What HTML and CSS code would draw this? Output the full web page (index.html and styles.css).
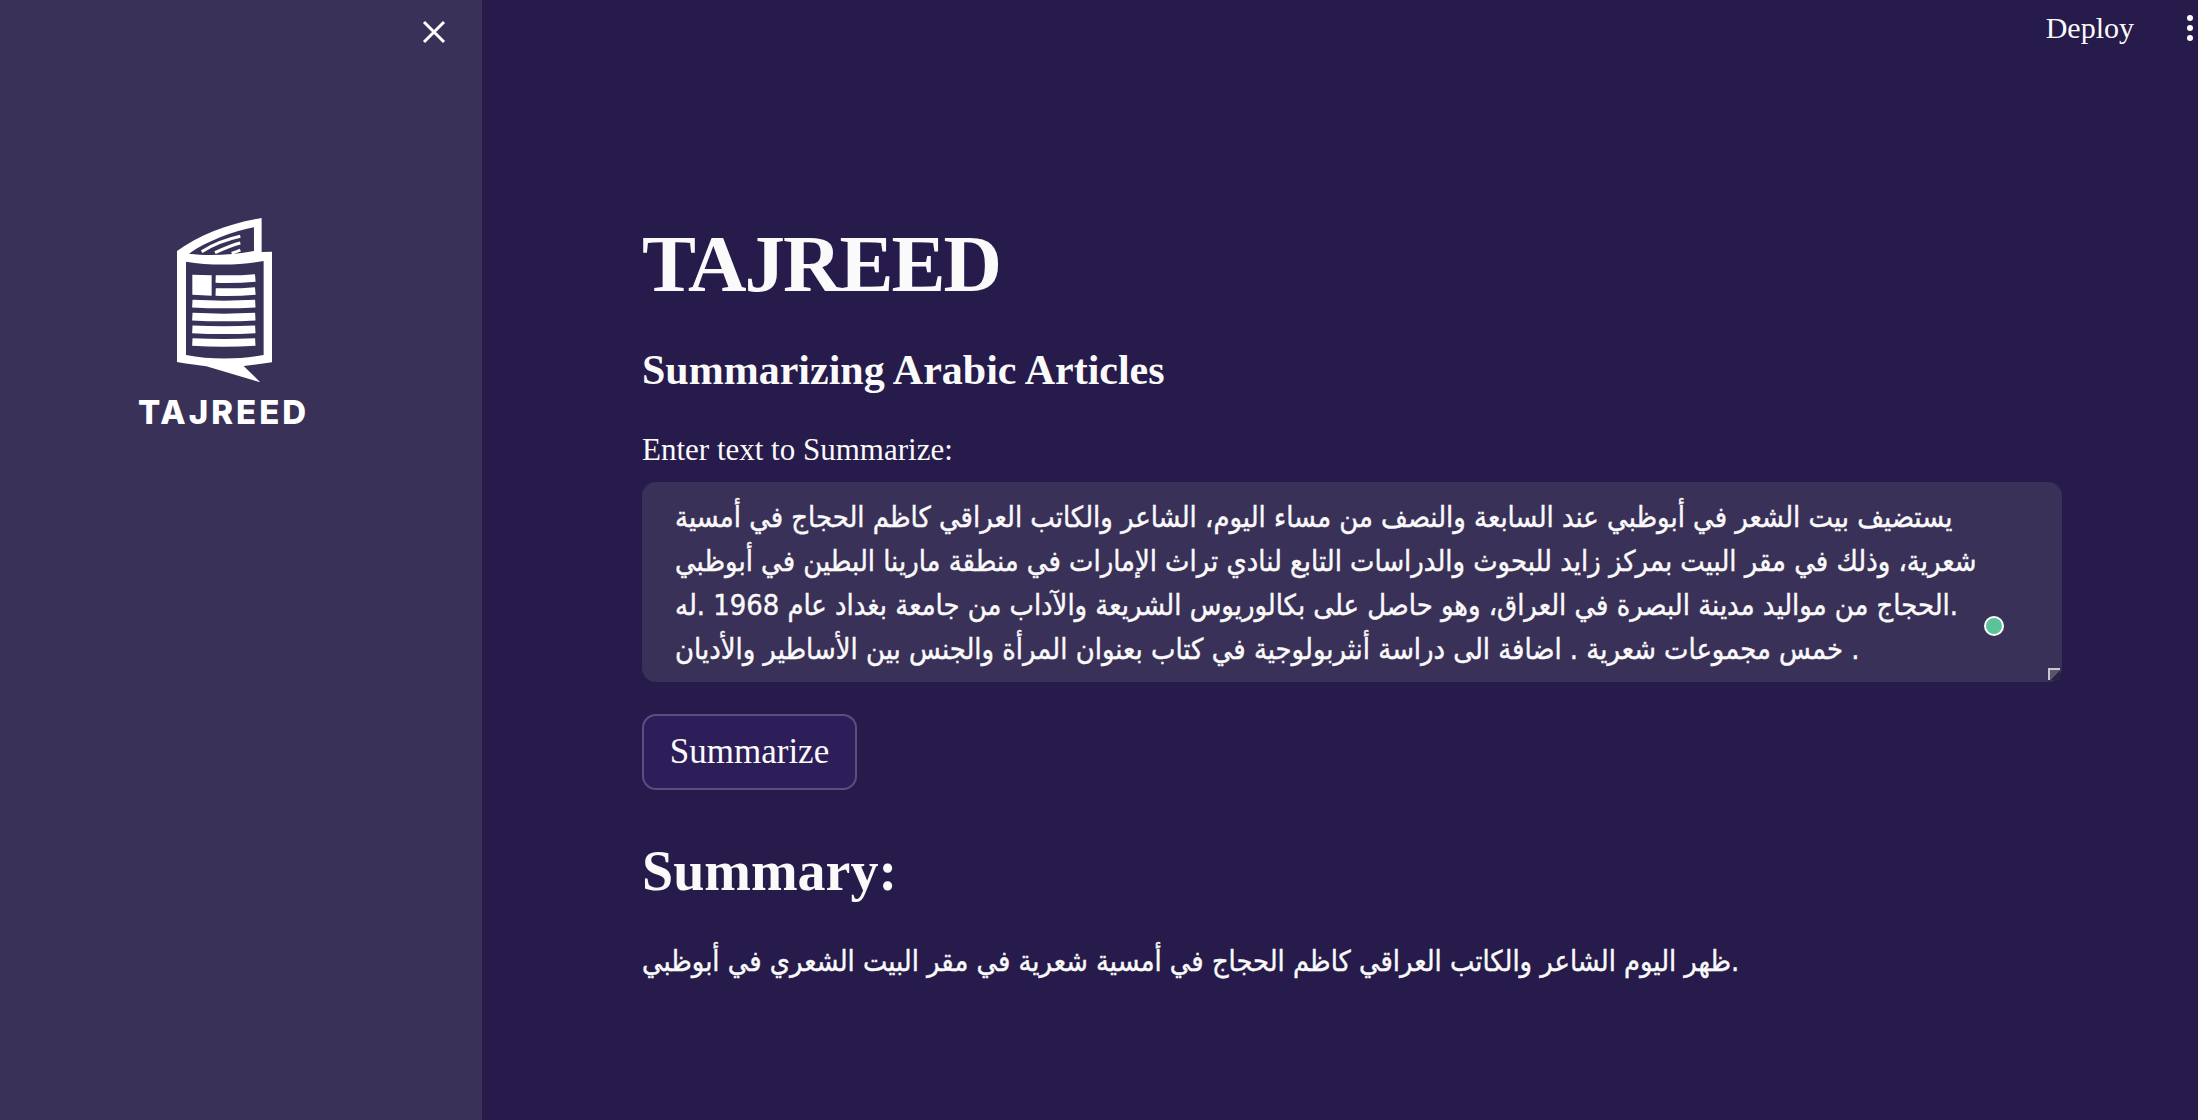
FILE: index.html

```html
<!DOCTYPE html>
<html lang="en">
<head>
  <meta charset="UTF-8" />
  <title>TAJREED</title>
  <link rel="stylesheet" href="styles.css">
</head>
<body>

  <aside class="sidebar">
    <div class="sidebar-top">
      <svg class="close-icon" viewBox="0 0 24 24" width="24" height="24">
        <path d="M2 2 L22 22 M22 2 L2 22" />
      </svg>
    </div>
    <div class="logo">
      <svg class="logo-mark" viewBox="232 85 286 493" width="95.3" height="164.3">
        <path class="logo-fill" fill-rule="evenodd" d="M232 184 C300 135 390 100 486 85 L486 187 L518 186 L518 518 C490 522 460 526 432 529 L482 578 L320 530 C290 526 260 522 232 517 Z M259 216 C330 228 420 228 492 214 L492 496 C420 510 330 510 259 496 Z M268 192 C320 155 400 125 463 113 L463 184 C400 195 330 200 268 192 Z" />
        <path class="logo-fill" d="M278 255 L336 257 L336 318 L278 315 Z" />
        <path class="logo-line logo-flap" d="M306 186 C340 165 385 148 422 140 M346 189 C370 178 400 165 422 160 M396 191 C405 188 415 185 422 181" />
        <path class="logo-line" d="M348 268 Q408 270 467 265 M348 307 Q408 309 467 304 M278 342 Q372 347 467 342 M278 381 Q372 386 467 381 M278 419 Q372 424 467 419 M278 457 Q372 462 467 457" />
      </svg>
      <div class="logo-name">TAJREED</div>
    </div>
  </aside>

  <main class="main">
    <header class="topbar">
      <span class="deploy">Deploy</span>
      <span class="kebab"><i></i><i></i><i></i></span>
    </header>

    <section class="content">
      <h1>TAJREED</h1>
      <h3>Summarizing Arabic Articles</h3>
      <label class="field-label" for="article">Enter text to Summarize:</label>
      <div class="field">
        <textarea id="article" wrap="off">يستضيف بيت الشعر في أبوظبي عند السابعة والنصف من مساء اليوم، الشاعر والكاتب العراقي كاظم الحجاج في أمسية
شعرية، وذلك في مقر البيت بمركز زايد للبحوث والدراسات التابع لنادي تراث الإمارات في منطقة مارينا البطين في أبوظبي
الحجاج من مواليد مدينة البصرة في العراق، وهو حاصل على بكالوريوس الشريعة والآداب من جامعة بغداد عام 1968 .له.
خمس مجموعات شعرية . اضافة الى دراسة أنثربولوجية في كتاب بعنوان المرأة والجنس بين الأساطير والأديان .</textarea>
        <span class="status-dot"></span>
        <span class="resize-grip"></span>
      </div>
      <button class="summarize-btn">Summarize</button>
      <h2>Summary:</h2>
      <p class="summary">ظهر اليوم الشاعر والكاتب العراقي كاظم الحجاج في أمسية شعرية في مقر البيت الشعري في أبوظبي.</p>
    </section>
  </main>

</body>
</html>
```

FILE: styles.css

```css
* {
  box-sizing: border-box;
}
body {
  margin: 0;
  height: 1120px;
  overflow: hidden;
  display: flex;
  background-color: #261b4a;
  color: #fafafa;
  font-family: "Liberation Serif", "DejaVu Sans", serif;
}

/* sidebar */
.sidebar {
  width: 482px;
  flex-shrink: 0;
  background-color: #3a3158;
}
.sidebar-top {
  display: flex;
  justify-content: flex-end;
  padding: 20px 36px 0 0;
}
.close-icon path {
  fill: none;
  stroke: white;
  stroke-width: 3;
}
.logo {
  margin-top: 174px;
  padding-left: 138px;
  width: 182px;
}
.logo-mark {
  display: block;
  margin-left: 39px;
}
.logo-fill {
  fill: white;
}
.logo-line {
  fill: none;
  stroke: white;
  stroke-width: 23;
}
.logo-flap {
  stroke-width: 9;
}
.logo-name {
  margin-top: 12px;
  font-family: Inter, sans-serif;
  font-weight: 800;
  font-size: 33px;
  line-height: 36px;
  letter-spacing: 3px;
  white-space: nowrap;
  color: white;
}

/* main */
.main {
  flex: 1;
  min-width: 0;
}
.topbar {
  display: flex;
  justify-content: flex-end;
  align-items: center;
  height: 56px;
  padding-right: 5px;
  gap: 53px;
}
.deploy {
  font-size: 30px;
}
.kebab {
  display: flex;
  flex-direction: column;
  gap: 4px;
}
.kebab i {
  width: 6px;
  height: 6px;
  border-radius: 50%;
  background: white;
}
.content {
  padding: 158px 136px 0 160px;
}
h1 {
  margin: 0;
  font-size: 81px;
  line-height: 100px;
  letter-spacing: -2px;
  font-weight: bold;
}
h3 {
  margin: 31px 0 0;
  font-size: 42px;
  line-height: 50px;
  font-weight: bold;
}
.field-label {
  display: block;
  margin-top: 35px;
  font-size: 31px;
  line-height: 40px;
}
.field {
  position: relative;
  margin-top: 12px;
}
textarea {
  display: block;
  width: 100%;
  height: 200px;
  padding: 13px 33px;
  border: none;
  outline: none;
  border-radius: 14px;
  background-color: #3a3158;
  color: #fafafa;
  font-family: "DejaVu Sans Condensed", "DejaVu Sans", sans-serif;
  font-size: 28.8px;
  line-height: 44px;
  -webkit-text-stroke: 0.4px #fafafa;
  overflow: hidden;
  white-space: pre;
  resize: none;
}
.status-dot {
  position: absolute;
  right: 58px;
  top: 134px;
  width: 20px;
  height: 20px;
  border-radius: 50%;
  background: #5bc29a;
  border: 2px solid white;
}
.resize-grip {
  position: absolute;
  right: 2px;
  bottom: 2px;
  width: 12px;
  height: 12px;
  border-top: 2px solid #c9c7d2;
  border-left: 2px solid #c9c7d2;
  background: linear-gradient(135deg, #5a5470 50%, #2a2540 50%);
}
.summarize-btn {
  display: block;
  margin-top: 32px;
  width: 215px;
  height: 76px;
  border: 2px solid #5a5080;
  border-radius: 14px;
  background-color: #2d1e5a;
  color: #fafafa;
  font-family: inherit;
  font-size: 35px;
}
h2 {
  margin: 46px 0 0;
  font-size: 56px;
  line-height: 70px;
  font-weight: bold;
}
.summary {
  margin: 33px 0 0;
  font-family: "DejaVu Sans Condensed", "DejaVu Sans", sans-serif;
  font-size: 28.7px;
  line-height: 44px;
  -webkit-text-stroke: 0.4px #fafafa;
}
```
